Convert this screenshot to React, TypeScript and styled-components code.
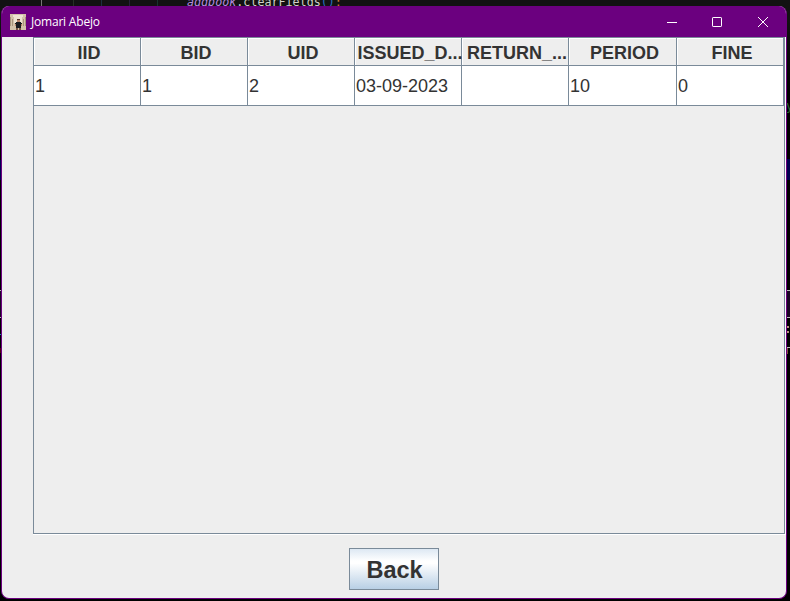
import React from "react";
import styled, { createGlobalStyle } from "styled-components";

const Global = createGlobalStyle`
  html, body { margin: 0; padding: 0; }
  body { width: 790px; height: 601px; overflow: hidden; background: #000; }
  * { box-sizing: border-box; }
`;

const Desktop = styled.div`
  position: relative;
  width: 790px;
  height: 601px;
  overflow: hidden;
  padding: 6px 3px 2px 1px;
  background: linear-gradient(#121212 0 20px, #000 90px);
`;

const CodeLine = styled.div`
  position: absolute;
  left: 187px;
  top: -6px;
  height: 16px;
  font: 11.7px/16px "DejaVu Sans Mono", monospace;
  white-space: pre;
  color: #d0d0c8;
`;

const Variable = styled.span`
  color: #b58be0;
  font-style: italic;
`;

const Paren = styled.span`
  color: #2a6fc0;
`;

const Semi = styled.span`
  color: #cc7832;
`;

const Mark = styled.i<{ $x: number; $y: number; $w: number; $h: number; $c: string }>`
  position: absolute;
  left: ${(p) => p.$x}px;
  top: ${(p) => p.$y}px;
  width: ${(p) => p.$w}px;
  height: ${(p) => p.$h}px;
  background: ${(p) => p.$c};
`;

const Glimpse = styled.div<{ $y: number; $c: string }>`
  position: absolute;
  left: 786px;
  top: ${(p) => p.$y}px;
  font: 12px/14px "DejaVu Sans Mono", monospace;
  color: ${(p) => p.$c};
`;

const Window = styled.main`
  position: relative;
  display: flex;
  flex-direction: column;
  width: 786px;
  height: 593px;
  border: 1px solid #6b007f;
  border-top: 0;
  border-radius: 8px;
  background: #eee;
  overflow: hidden;
`;

const TitleBar = styled.header`
  display: flex;
  align-items: center;
  flex: 0 0 31px;
  padding-left: 8px;
  background: #6b007f;
  color: #fff;
`;

const Title = styled.h1`
  flex: 1;
  margin: 0 0 0 5px;
  font: 12px/16px "Open Sans", "Noto Sans", sans-serif;
  letter-spacing: -0.2px;
`;

const Controls = styled.div`
  display: flex;
`;

const Control = styled.button<{ $w: number }>`
  display: flex;
  align-items: center;
  justify-content: center;
  width: ${(p) => p.$w}px;
  height: 31px;
  padding: 0;
  border: 0;
  background: transparent;
`;

const Content = styled.section`
  display: flex;
  flex-direction: column;
  align-items: flex-start;
  padding-left: 31px;
`;

const ScrollPane = styled.div`
  width: 753px;
  height: 498px;
  border-right: 1px solid #fff;
  border-bottom: 1px solid #fff;
`;

const Viewport = styled.div`
  width: 752px;
  height: 497px;
  border: 1px solid #7a8a99;
`;

const Table = styled.table`
  width: 750px;
  table-layout: fixed;
  border-collapse: separate;
  border-spacing: 0;
  font-family: "Liberation Sans", Arial, sans-serif;
  font-size: 18px;
  color: #333;
`;

const HeadCell = styled.th<{ $w: number }>`
  width: ${(p) => p.$w}px;
  height: 28px;
  padding: 2px 0 0 2px;
  border-right: 1px solid #7a8a99;
  border-bottom: 1px solid #7a8a99;
  box-shadow: inset 1px 1px #fff;
  font-weight: 700;
  line-height: 24px;
  text-align: center;
  white-space: nowrap;
`;

const HeadLabel = styled.span`
  display: block;
  margin: 0 -2px 0 0;
`;

const Cell = styled.td`
  height: 40px;
  padding: 1px 0 0 1px;
  border-right: 1px solid #7a8a99;
  border-bottom: 1px solid #7a8a99;
  background: #fff;
  line-height: 24px;
  white-space: nowrap;
`;

const BackButton = styled.button`
  width: 90px;
  height: 42px;
  margin: 13px 0 0 316px;
  padding: 1px 0 0 1px;
  border: 1px solid #7a8a99;
  background: linear-gradient(#dde8f3 0%, #fff 30%, #fff 36%, #b8cfe5 100%);
  font: 700 23.5px/38px "Liberation Sans", Arial, sans-serif;
  color: #333;
`;

const columns = [
  { name: "IID", width: 107, value: "1" },
  { name: "BID", width: 107, value: "1" },
  { name: "UID", width: 107, value: "2" },
  { name: "ISSUED_D...", width: 107, value: "03-09-2023" },
  { name: "RETURN_...", width: 107, value: "" },
  { name: "PERIOD", width: 108, value: "10" },
  { name: "FINE", width: 107, value: "0" },
];

const marks: [number, number, number, number, string][] = [
  [41, 0, 1, 6, "#777"],
  [73, 0, 1, 6, "#263126"],
  [101, 0, 1, 6, "#1c3040"],
  [129, 0, 1, 6, "#28203a"],
  [157, 0, 1, 6, "#17342f"],
  [0, 160, 1, 20, "#000050"],
  [0, 290, 1, 1, "#bbb"],
  [0, 291, 1, 26, "#1a0524"],
  [0, 317, 1, 1, "#bbb"],
  [0, 334, 1, 1, "#1680c0"],
  [0, 348, 1, 5, "#500010"],
  [787, 159, 3, 21, "#000050"],
  [787, 290, 3, 1, "#bbb"],
  [787, 291, 3, 26, "#1a0524"],
  [787, 317, 3, 1, "#bbb"],
  [787, 326, 2, 2, "#b89080"],
  [787, 331, 2, 2, "#b89080"],
  [787, 347, 3, 1, "#bbb"],
  [787, 348, 1, 6, "#80503c"],
];

function AppIcon() {
  return (
    <svg width="16" height="16" viewBox="0 0 16 16" shapeRendering="crispEdges">
      <path fill="#d3c3aa" d="M0 0h16v16H0z" />
      <path fill="#eee4d2" d="M3 1h10v2H3zM4 3h8v6H4z" />
      <path fill="#a8957c" d="M0 3h1v9H0zM15 3h1v9h-1zM2 5h1v7H2zM13 5h1v7h-1z" />
      <path fill="#5d4032" d="M7 5h3v1H7z" />
      <path fill="#b98468" d="M7 6h3v2H7zM5 10h1v2H5zM11 10h1v2h-1z" />
      <path fill="#1b1d20" d="M6 8h5v4H6zM5 9h1v1H5zM11 9h1v1h-1zM6 12h5v2H6z" />
      <path fill="#7b5545" d="M6 14h2v2H6zM9 14h2v2H9z" />
    </svg>
  );
}

export default function App() {
  return (
    <>
      <Global />
      <Desktop>
        <CodeLine>
          <Variable>addbook</Variable>.clearFields<Paren>()</Paren>
          <Semi>;</Semi>
        </CodeLine>
        {marks.map(([x, y, w, h, c]) => (
          <Mark key={`${x}-${y}`} $x={x} $y={y} $w={w} $h={h} $c={c} />
        ))}
        <Glimpse $y={99} $c="#2c6a35">y</Glimpse>
        <Window>
          <TitleBar>
            <AppIcon />
            <Title>Jomari Abejo</Title>
            <Controls>
              <Control $w={44} aria-label="Minimize">
                <svg width="10" height="10" shapeRendering="crispEdges">
                  <path d="M0 5.5h10" stroke="#fff" />
                </svg>
              </Control>
              <Control $w={46} aria-label="Maximize">
                <svg width="10" height="10">
                  <rect x=".5" y=".5" width="9" height="9" rx=".6" fill="none" stroke="#fff" />
                </svg>
              </Control>
              <Control $w={46} aria-label="Close">
                <svg width="10" height="10">
                  <path d="M0 0l10 10M10 0L0 10" stroke="#fff" />
                </svg>
              </Control>
            </Controls>
          </TitleBar>
          <Content>
            <ScrollPane>
              <Viewport>
                <Table>
                  <thead>
                    <tr>
                      {columns.map((c) => (
                        <HeadCell key={c.name} $w={c.width}>
                          <HeadLabel>{c.name}</HeadLabel>
                        </HeadCell>
                      ))}
                    </tr>
                  </thead>
                  <tbody>
                    <tr>
                      {columns.map((c) => (
                        <Cell key={c.name}>{c.value}</Cell>
                      ))}
                    </tr>
                  </tbody>
                </Table>
              </Viewport>
            </ScrollPane>
            <BackButton>Back</BackButton>
          </Content>
        </Window>
      </Desktop>
    </>
  );
}
